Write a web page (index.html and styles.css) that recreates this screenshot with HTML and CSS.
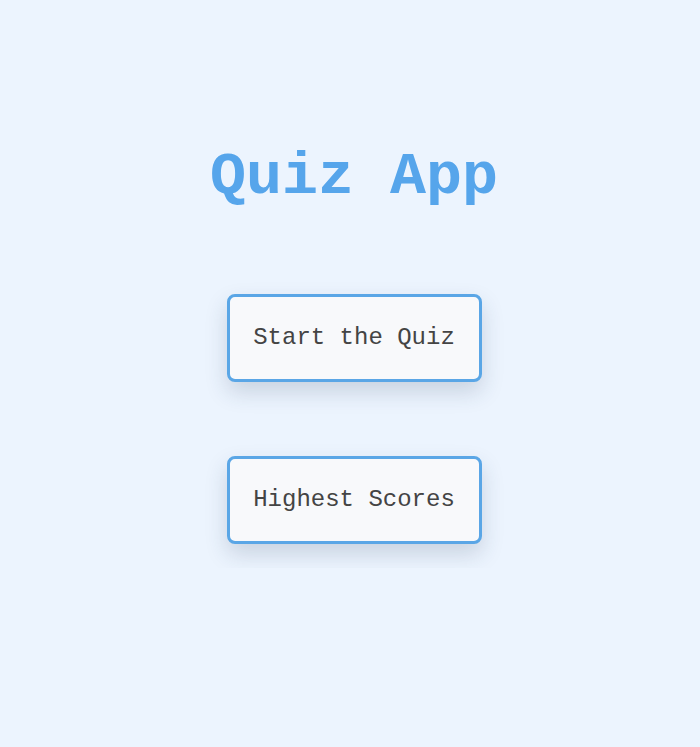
FILE: index.html
```html
<!DOCTYPE html>
<html lang="en">
<head>
<meta charset="utf-8">
<title>Quiz App</title>
<link rel="stylesheet" href="styles.css">
</head>
<body>
<main class="home">
  <h1 class="title">Quiz App</h1>
  <a class="btn" href="#">Start the Quiz</a>
  <a class="btn" href="#">Highest Scores</a>
</main>
</body>
</html>
```
FILE: styles.css
```css
html, body {
  margin: 0;
  padding: 0;
  background: #ecf4fe;
  height: 100%;
}
body {
  font-family: "Courier New", "Liberation Mono", monospace;
}
.home {
  display: flex;
  flex-direction: column;
  align-items: center;
  padding: 143px 0 24px 8px;
  overflow: hidden;
}
.title {
  margin: 0 0 83px;
  font-size: 60px;
  line-height: 68px;
  font-weight: bold;
  color: #56a5eb;
}
.btn {
  display: block;
  box-sizing: border-box;
  width: 255px;
  padding: 27px 0;
  font-size: 24px;
  line-height: 28px;
  text-align: center;
  color: #444;
  text-decoration: none;
  background: #f8f9fb;
  border: 3px solid #5aa6e6;
  border-radius: 8px;
  box-shadow: 0 10px 22px rgba(40, 60, 90, 0.18);
}
.btn + .btn {
  margin-top: 74px;
}
```
